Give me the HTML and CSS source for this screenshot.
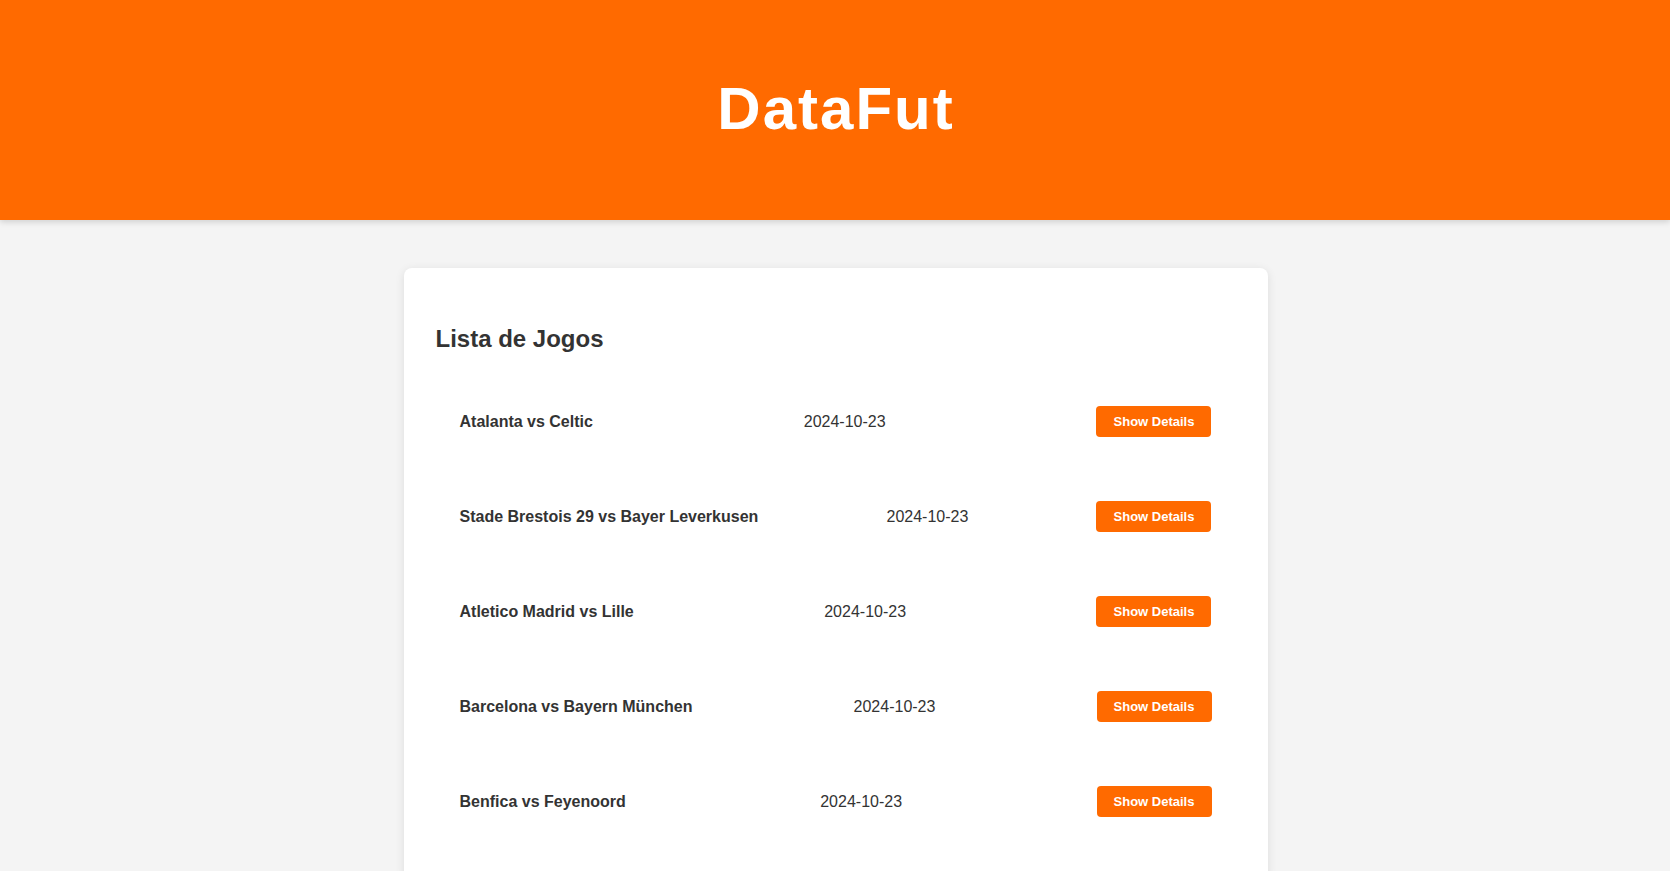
FILE: index.html
```html
<!DOCTYPE html>
<html lang="pt">
<head>
<meta charset="utf-8">
<title>DataFut</title>
<link rel="stylesheet" href="styles.css">
</head>
<body>
<header class="site-header">
  <h1 class="brand">DataFut</h1>
</header>
<main class="container">
  <section class="card">
    <h2 class="card-title">Lista de Jogos</h2>
    <ul class="match-list">
      <li class="match">
        <span class="match-teams">Atalanta vs Celtic</span>
        <span class="match-date">2024-10-23</span>
        <button class="btn">Show Details</button>
      </li>
      <li class="match">
        <span class="match-teams">Stade Brestois 29 vs Bayer Leverkusen</span>
        <span class="match-date">2024-10-23</span>
        <button class="btn">Show Details</button>
      </li>
      <li class="match">
        <span class="match-teams">Atletico Madrid vs Lille</span>
        <span class="match-date">2024-10-23</span>
        <button class="btn">Show Details</button>
      </li>
      <li class="match">
        <span class="match-teams">Barcelona vs Bayern München</span>
        <span class="match-date">2024-10-23</span>
        <button class="btn">Show Details</button>
      </li>
      <li class="match">
        <span class="match-teams">Benfica vs Feyenoord</span>
        <span class="match-date">2024-10-23</span>
        <button class="btn">Show Details</button>
      </li>
    </ul>
  </section>
</main>
</body>
</html>
```

FILE: styles.css
```css
* { box-sizing: border-box; }

html, body {
  margin: 0;
  padding: 0;
}

body {
  background: #f4f4f4;
  font-family: "Liberation Sans", Arial, Helvetica, sans-serif;
  color: #333;
}

.site-header {
  background: #ff6a00;
  height: 220px;
  display: flex;
  align-items: center;
  justify-content: center;
  box-shadow: 0 2px 6px rgba(0, 0, 0, 0.15);
  position: relative;
  z-index: 1;
}

.brand {
  margin: 0 0 4px 2px;
  color: #fff;
  font-size: 60px;
  font-weight: bold;
  letter-spacing: 2px;
}

.container {
  padding-top: 48px;
  padding-left: 1px;
  display: flex;
  justify-content: center;
}

.card {
  width: 864px;
  background: #fff;
  border-radius: 8px;
  padding: 32px;
  box-shadow: 0 2px 10px rgba(0, 0, 0, 0.1);
}

.card-title {
  margin: 25px 0 21px;
  font-size: 24px;
  font-weight: bold;
  color: #333;
}

.match-list {
  list-style: none;
  margin: 0;
  padding: 0;
}

.match {
  display: flex;
  align-items: center;
  justify-content: space-between;
  padding: 32px 24px;
  font-size: 16px;
}

.match-teams {
  font-weight: bold;
}

.btn {
  background: #ff6a00;
  color: #fff;
  border: none;
  border-radius: 4px;
  font-family: "Liberation Sans", Arial, sans-serif;
  font-weight: bold;
  font-size: 13px;
  width: 115px;
  height: 31px;
  padding: 0;
  cursor: pointer;
}
```
